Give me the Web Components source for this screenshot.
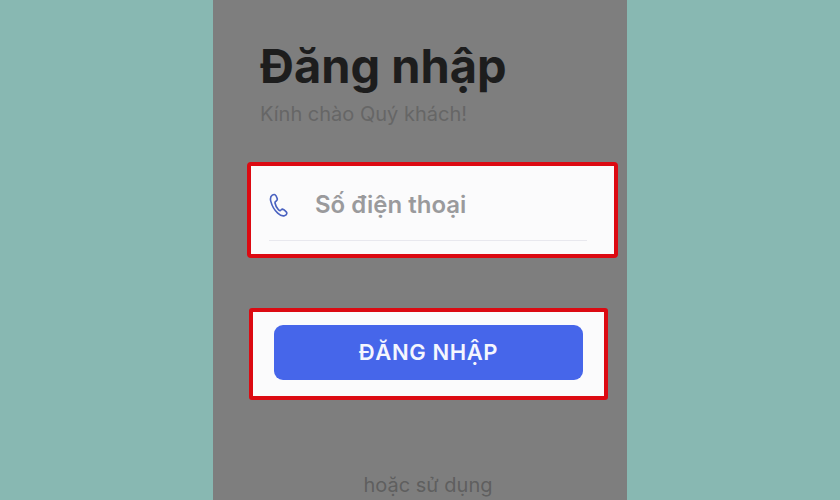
<!DOCTYPE html>
<html lang="vi">
<head>
<meta charset="utf-8">
<title>Đăng nhập</title>
<style>
html, body { margin: 0; height: 100%; }
body {
	display: flex;
	justify-content: center;
	height: 500px;
	overflow: hidden;
	background: #88b8b2;
	font-family: Inter, "Noto Sans", sans-serif;
}
</style>
</head>
<body>
<login-screen>
	<span slot="title">Đăng nhập</span>
	<span slot="subtitle">Kính chào Quý khách!</span>
	<phone-field placeholder="Số điện thoại"></phone-field>
	<login-button>ĐĂNG NHẬP</login-button>
	<span slot="footer">hoặc sử dụng</span>
</login-screen>

<script>
class LoginScreen extends HTMLElement {
	constructor() {
		super();
		this.attachShadow({mode: 'open'}).innerHTML = `
<style>
:host {
	display: flex;
	flex-direction: column;
	box-sizing: border-box;
	width: 414px;
	height: 500px;
	overflow: hidden;
	padding: 36px 0 0 34px;
	background: #7e7e7e;
}
.title {
	margin-left: 13px;
	font-size: 47px;
	line-height: 60px;
	font-weight: 700;
	color: #1d1d1d;
}
.subtitle {
	margin: 3px 0 0 13px;
	font-size: 20px;
	line-height: 30px;
	color: #666;
}
.footer {
	margin: 70px 0 0 8px;
	text-align: center;
	width: 346px;
	font-size: 20px;
	line-height: 30px;
	color: #5f5f5f;
}
</style>
<div class="title"><slot name="title"></slot></div>
<div class="subtitle"><slot name="subtitle"></slot></div>
<slot></slot>
<div class="footer"><slot name="footer"></slot></div>`;
	}
}

class PhoneField extends HTMLElement {
	constructor() {
		super();
		this.attachShadow({mode: 'open'}).innerHTML = `
<style>
:host {
	display: block;
	box-sizing: border-box;
	width: 371px;
	height: 96px;
	margin-top: 33px;
	padding: 0 27px 0 18px;
	background: #fbfbfc;
	border: 4px solid #dc0a12;
	border-radius: 4px;
}
.row {
	display: flex;
	align-items: center;
	height: 74px;
	border-bottom: 1px solid #e8e8ee;
}
svg { width: 20px; height: 26px; margin: 4px 26px 0 0; flex: none; }
.text {
	font-size: 24px;
	font-weight: 600;
	color: #9a9a9c;
	padding-top: 2px;
}
</style>
<div class="row">
	<svg viewBox="0 0 22 28" fill="none" stroke="#4a62c0" stroke-width="1.8" stroke-linejoin="round" stroke-linecap="round">
		<path d="M3.6 3.2 C1.6 4.6 1.2 7 2 10 C3.2 14.6 6 19.6 9.6 23 C12 25.2 14.6 26.6 17 25.8 C18.8 25.2 19.8 23.8 19.6 22.6 C19.4 21.6 16.6 19 15.2 18.6 C14 18.4 13.4 19.4 12.6 20 C11.8 20.4 11 20 10.2 19 C8.6 17 7 14 6.6 11.8 C6.4 10.6 7 10.2 8 9.6 C9 9 9.4 8.2 9 6.8 C8.6 5.4 7.6 3 6.6 2.6 C5.6 2.2 4.6 2.5 3.6 3.2 Z"/>
	</svg>
	<span class="text">${this.getAttribute('placeholder')}</span>
</div>`;
	}
}

class LoginButton extends HTMLElement {
	constructor() {
		super();
		this.attachShadow({mode: 'open'}).innerHTML = `
<style>
:host {
	display: block;
	box-sizing: border-box;
	width: 359px;
	height: 92px;
	margin: 50px 0 0 2px;
	padding: 13px 21px 0 21px;
	background: #fbfbfc;
	border: 4px solid #dc0a12;
	border-radius: 3px;
}
.btn {
	display: flex;
	align-items: center;
	justify-content: center;
	box-sizing: border-box;
	height: 55px;
	padding-bottom: 2px;
	border-radius: 9px;
	background: #4666ea;
	color: #f4f6fe;
	font-size: 22px;
	font-weight: 600;
	letter-spacing: 0.6px;
}
</style>
<div class="btn"><slot></slot></div>`;
	}
}

customElements.define('login-screen', LoginScreen);
customElements.define('phone-field', PhoneField);
customElements.define('login-button', LoginButton);
</script>
</body>
</html>
